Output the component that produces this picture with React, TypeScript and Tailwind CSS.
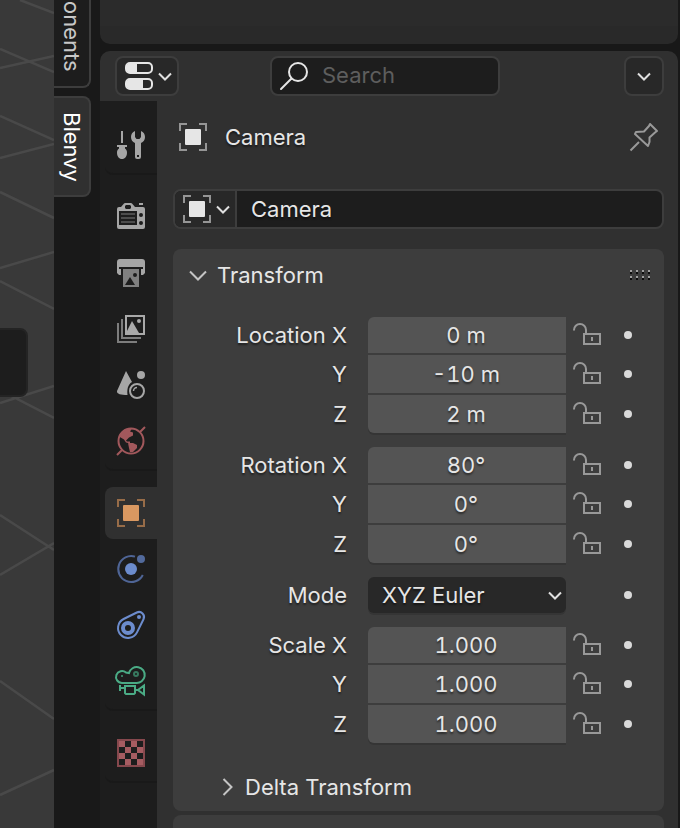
import type { ReactNode } from "react";

type Kids = { children: ReactNode };

function Icon({ children }: Kids) {
  return (
    <svg width="28" height="28" viewBox="0 0 28 28" fill="none" className="shrink-0 overflow-visible" aria-hidden="true">
      {children}
    </svg>
  );
}

function Chevron() {
  return (
    <svg width="14" height="9" viewBox="0 0 14 9" fill="none" className="shrink-0" aria-hidden="true">
      <path d="M1 1.500L7 7.500L13 1.500" stroke="#e0e0e0" strokeWidth="2" />
    </svg>
  );
}

function ObjectIcon({ frame, fill }: { frame: string; fill: string }) {
  return (
    <Icon>
      <path d="M1 8V1h7M20 1h7v7M27 20v7h-7M8 27H1v-7" stroke={frame} strokeWidth="2" />
      <rect x="6" y="6" width="16" height="16" rx="1" fill={fill} />
    </Icon>
  );
}

function ToolIcon() {
  return (
    <Icon>
      <g fill="#a6a6a6">
        <rect x="4" y="0" width="2" height="12" />
        <path d="M0 14h10v2H8v1.500c1.300 1 2 2.300 2 4C10 25.500 8 28 5 28s-5-2.500-5-6.500c0-1.700.7-3 2-4V16H0z" />
        <path fillRule="evenodd" d="M18 0c-2.500 1-4 3.300-4 6 0 2.700 1.500 5 4 6v14a2 2 0 0 0 2 2h2a2 2 0 0 0 2-2V12c2.500-1 4-3.300 4-6 0-2.700-1.500-5-4-6v6l-1.500 2h-3L18 6zM20 24h2v2h-2z" />
      </g>
    </Icon>
  );
}

function RenderIcon() {
  return (
    <Icon>
      <path
        fillRule="evenodd"
        fill="#a6a6a6"
        d="M22 0h4v2h-4zM2 4h2l3-3.500L8 0h6l1 .5L18 4h8a2 2 0 0 1 2 2v18a2 2 0 0 1-2 2H2a2 2 0 0 1-2-2V6a2 2 0 0 1 2-2zM9 2L8 3v2l1 1h4l1-1V3l-1-1zM2 8v14h18V8zM24 10a2 2 0 1 0 0 4 2 2 0 0 0 0-4zM24 18a2 2 0 1 0 0 4 2 2 0 0 0 0-4z"
      />
      <path d="M4 11h14M4 15h14M4 19h14" stroke="#4c4c4c" strokeWidth="2" />
    </Icon>
  );
}

function OutputIcon() {
  return (
    <Icon>
      <path fill="#a6a6a6" d="M3 0h22a3 3 0 0 1 3 3v11l-2 2h-2v-6h2V8H2v2h2v6H2l-2-2V3a3 3 0 0 1 3-3z" />
      <path fill="#808080" fillRule="evenodd" d="M6 10h16v18H6zM8 26h10l-5-8zM18 14a2 2 0 1 0 0 4 2 2 0 0 0 0-4z" />
    </Icon>
  );
}

function ViewLayerIcon() {
  return (
    <Icon>
      <path d="M1 8v19h19M5 4v19h19" stroke="#7d7d7d" strokeWidth="2" />
      <rect x="9" y="1" width="18" height="18" stroke="#a9a9a9" strokeWidth="2" />
      <path d="M10 18v-2l5-10 7 12z" fill="#a9a9a9" />
      <circle cx="22" cy="6" r="2" fill="#a9a9a9" />
    </Icon>
  );
}

function SceneIcon() {
  return (
    <Icon>
      <path d="M9 0L0 20c-.5 3 4 4 10.500 4C10 19 10.500 13.500 15 11z" fill="#a6a6a6" />
      <circle cx="24" cy="4" r="4" fill="#a6a6a6" />
      <circle cx="20" cy="20" r="9" fill="#1d1d1d" />
      <circle cx="20" cy="20" r="7" stroke="#a6a6a6" strokeWidth="2" />
      <path d="M16.500 20a3.500 3.500 0 0 1 3.500-3.500" stroke="#a6a6a6" strokeWidth="1.500" />
    </Icon>
  );
}

function WorldIcon() {
  return (
    <Icon>
      <circle cx="14" cy="14" r="12.500" stroke="#a2585c" strokeWidth="2" />
      <path d="M28 0l-5 5M0 28l5-5" stroke="#a2585c" strokeWidth="2" />
      <path d="M3 7l5-5 7-.5-2 3 3 1v3l-4 2-3 3 1 1h3v2l-4-1-2-3-5-3zM11 16h5l4 2v3l-4 4h-3l-1-4z" fill="#a2585c" />
    </Icon>
  );
}

function PhysicsIcon() {
  return (
    <Icon>
      <path d="M18 1.600A13 13 0 1 0 25.800 20" stroke="#4f6596" strokeWidth="2" />
      <circle cx="14" cy="14" r="6" fill="#6c8ccd" />
      <circle cx="24" cy="4" r="4" fill="#526a9c" />
    </Icon>
  );
}

function ConstraintIcon() {
  return (
    <Icon>
      <path d="M6.600 8L19.800 1.500A5 5 0 0 1 26.500 8.200L20 21.400A10 10 0 1 1 6.600 8z" stroke="#6c8ccd" strokeWidth="2" />
      <circle cx="11" cy="17" r="5" stroke="#6c8ccd" strokeWidth="4" />
      <circle cx="22" cy="6" r="2" fill="#6c8ccd" />
    </Icon>
  );
}

function CameraDataIcon() {
  return (
    <Icon>
      <path d="M5 16A6 6 0 1 1 9 5.500L12 6A8 8 0 1 1 19 16z" stroke="#4aab85" strokeWidth="2" />
      <circle cx="19" cy="7" r="2" stroke="#37795f" strokeWidth="2" />
      <rect x="4" y="8" width="2" height="2" fill="#37795f" />
      <path d="M8 19h10v7l-1 1H9l-1-1zM3 18v6M3 21h5M18 23h3M27 18.500v9L21 23z" stroke="#4aab85" strokeWidth="2" />
    </Icon>
  );
}

function TextureIcon() {
  return (
    <Icon>
      <rect x="1" y="1" width="26" height="26" stroke="#86484d" strokeWidth="2" />
      <path
        fill="#a65c61"
        d="M2 2h6v6H2zM14 2h6v6h-6zM8 8h6v6H8zM20 8h6v6h-6zM2 14h6v6H2zM14 14h6v6h-6zM8 20h6v6H8zM20 20h6v6h-6z"
      />
    </Icon>
  );
}

function NavGroup({ children }: Kids) {
  return (
    <div className="flex flex-col gap-1 rounded-bl-lg border-b-2 border-[#191919] pb-0.5">{children}</div>
  );
}

function NavTab({ label, active, children }: Kids & { label: string; active?: boolean }) {
  return (
    <button
      type="button"
      aria-label={label}
      aria-pressed={!!active}
      className={
        active
          ? "flex h-13 w-full items-center rounded-l-lg bg-[#303030] pl-3"
          : "flex h-13 w-full items-center rounded-l-lg pl-3"
      }
    >
      {children}
    </button>
  );
}

function KeyDot({ name }: { name: string }) {
  return (
    <button type="button" aria-label={"Animate " + name} className="flex size-6 items-center justify-center">
      <span className="size-2 rounded-full bg-[#dadada]" />
    </button>
  );
}

function Lock({ name }: { name: string }) {
  return (
    <label className="flex">
      <input type="checkbox" className="sr-only" aria-label={"Lock " + name} />
      <Icon>
        <path d="M1 9.500V9a6 6 0 0 1 12 0v3" stroke="#999999" strokeWidth="2" />
        <rect x="11" y="13" width="16" height="10" stroke="#999999" strokeWidth="2" />
        <path d="M19 16v4" stroke="#999999" strokeWidth="2" />
      </Icon>
    </label>
  );
}

const rowGrid = "grid grid-cols-[65fr_66fr_98px] items-center";
const axes = ["X", "Y", "Z"];

function Vector({ name, values }: { name: string; values: string[] }) {
  return (
    <div role="group" aria-label={name} className="flex flex-col gap-0.5">
      {values.map((value, i) => {
        const id = name + axes[i];
        const shape =
          i === 0
            ? "h-9 rounded-tl-md"
            : i === 1
              ? "h-[38px]"
              : "h-[38px] rounded-bl-md shadow-[0_2px_0_#353535]";
        return (
          <div key={id} className={rowGrid}>
            <label htmlFor={id} className="pr-[21px] text-right">
              {i === 0 ? name + " X" : axes[i]}
            </label>
            <input
              id={id}
              defaultValue={value}
              className={"w-full min-w-0 bg-[#545454] pr-0.5 text-center tabular-nums outline-none [text-shadow:inherit] " + shape}
            />
            <div className="flex items-center gap-[15px] pl-[7px]">
              <Lock name={id} />
              <KeyDot name={id} />
            </div>
          </div>
        );
      })}
    </div>
  );
}

function Viewport() {
  return (
    <div className="relative w-[54px] shrink-0 overflow-hidden bg-[#393939]">
      <svg width="54" height="828" viewBox="0 0 54 828" fill="none" className="block" aria-hidden="true">
        <path
          d="M20 0L54 13M0 49L54 72M0 68L54 56M0 116L54 140M0 158L54 144M0 192L54 218M0 268L54 252M0 281L54 309M0 403L54 386M0 390L54 418M0 515L54 550M0 575L54 543M0 681L54 719M0 795L54 770"
          stroke="#494949"
          strokeWidth="2.500"
        />
      </svg>
      <div className="absolute top-[328px] -left-3 h-[69px] w-10 rounded-lg border-2 border-[#242424] bg-[#1d1d1d]" />
    </div>
  );
}

export default function App() {
  return (
    <div className="flex h-screen overflow-hidden bg-[#181818] font-['Inter',sans-serif] text-[22px] leading-7 text-[#e6e6e6]">
      <Viewport />

      <div className="flex w-[46px] shrink-0 flex-col gap-2 bg-[#191919] pr-[9px]">
        <button
          type="button"
          className="flex h-22 w-full items-center justify-end overflow-hidden rounded-br-lg border-r-2 border-b-2 border-[#3d3d3d] bg-[#1d1d1d] pb-3.5 text-[#c8c8c8] [writing-mode:vertical-rl]"
        >
          Components
        </button>
        <button
          type="button"
          className="flex h-[101px] w-full items-center justify-center rounded-r-lg border-2 border-l-0 border-[#3d3d3d] bg-[#303030] text-white [writing-mode:vertical-rl]"
        >
          Blenvy
        </button>
      </div>

      <div className="mr-0.5 flex min-w-0 flex-1 flex-col">
        <div className="h-11 shrink-0 rounded-b-[10px] bg-[#292929]">
          <div className="h-[26px] bg-[#2b2b2b]" />
        </div>

        <main className="mt-[7px] flex min-h-0 flex-1 flex-col rounded-t-[10px] bg-[#303030]">
          <header className="flex h-[50px] shrink-0 items-center pr-3.5 pl-[15px]">
            <button
              type="button"
              aria-label="Editor type"
              className="flex h-10 w-16 shrink-0 items-center gap-[5px] rounded-lg border-2 border-[#3d3d3d] bg-[#282828] pl-2"
            >
              <Icon>
                <rect x="1" y="1" width="26" height="10" rx="4" stroke="#e6e6e6" strokeWidth="2" />
                <path d="M4 1h8v10H4L1 8V4z" fill="#e6e6e6" />
                <rect x="1" y="17" width="26" height="10" rx="4" stroke="#e6e6e6" strokeWidth="2" />
                <path d="M4 17h14v10H4l-3-3v-4z" fill="#e6e6e6" />
              </Icon>
              <Chevron />
            </button>
            <label className="ml-[91px] flex h-10 w-[230px] items-center gap-3.5 rounded-lg border-2 border-[#3d3d3d] bg-[#1d1d1d] pl-2">
              <Icon>
                <circle cx="18" cy="10" r="9" stroke="#e6e6e6" strokeWidth="2" />
                <path d="M11.500 16.500L1 27" stroke="#e6e6e6" strokeWidth="2" strokeLinecap="round" />
              </Icon>
              <input
                type="text"
                aria-label="Search"
                placeholder="Search"
                className="w-full min-w-0 bg-transparent pb-0.5 outline-none placeholder:text-[#5e5e5e]"
              />
            </label>
            <button
              type="button"
              aria-label="Options"
              className="ml-auto flex size-10 shrink-0 items-center justify-center rounded-lg border-2 border-[#3d3d3d] bg-[#282828]"
            >
              <Chevron />
            </button>
          </header>

          <div className="flex min-h-0 flex-1">
            <nav aria-label="Property tabs" className="flex w-[57px] shrink-0 flex-col gap-4 bg-[#1d1d1d] pt-[18px] pl-[5px]">
              <NavGroup>
                <NavTab label="Tool"><ToolIcon /></NavTab>
              </NavGroup>
              <NavGroup>
                <NavTab label="Render"><RenderIcon /></NavTab>
                <NavTab label="Output"><OutputIcon /></NavTab>
                <NavTab label="View layer"><ViewLayerIcon /></NavTab>
                <NavTab label="Scene"><SceneIcon /></NavTab>
                <NavTab label="World"><WorldIcon /></NavTab>
              </NavGroup>
              <NavGroup>
                <NavTab label="Object" active><ObjectIcon frame="#976c48" fill="#d99861" /></NavTab>
                <NavTab label="Physics"><PhysicsIcon /></NavTab>
                <NavTab label="Constraints"><ConstraintIcon /></NavTab>
                <NavTab label="Data"><CameraDataIcon /></NavTab>
              </NavGroup>
              <NavGroup>
                <NavTab label="Texture"><TextureIcon /></NavTab>
              </NavGroup>
            </nav>

            <div className="flex min-w-0 flex-1 flex-col pr-3.5 pl-4 [text-shadow:0_2px_2px_rgb(0_0_0/0.5)]">
              <div className="mt-4 flex h-10 shrink-0 items-center px-1.5">
                <ObjectIcon frame="#959595" fill="#e6e6e6" />
                <h1 className="ml-[18px]">Camera</h1>
                <button type="button" aria-label="Pin" className="ml-auto">
                  <Icon>
                    <path
                      d="M20 1l7 7-2 1.500-5.500 5V19L18 23 5 11l1-2 8-.5L19 3zM9 19l-8.500 8.500"
                      stroke="#999999"
                      strokeWidth="2"
                      strokeLinejoin="round"
                    />
                  </Icon>
                </button>
              </div>

              <div className="mt-8 flex h-10 shrink-0 overflow-hidden rounded-lg border-2 border-[#3d3d3d] bg-[#1d1d1d]">
                <button
                  type="button"
                  aria-label="Browse objects"
                  className="flex w-[62px] shrink-0 items-center gap-[5px] border-r-2 border-[#3d3d3d] bg-[#282828] pl-2"
                >
                  <ObjectIcon frame="#959595" fill="#e6e6e6" />
                  <Chevron />
                </button>
                <input
                  aria-label="Object name"
                  defaultValue="Camera"
                  className="min-w-0 flex-1 bg-transparent px-3.5 outline-none [text-shadow:inherit]"
                />
              </div>

              <section className="mt-5 flex shrink-0 flex-col rounded-lg bg-[#3d3d3d] pb-1">
                <div className="flex h-13 items-center pr-3.5 pl-4">
                  <button type="button" aria-expanded="true" className="flex items-center gap-2.5">
                    <svg width="18" height="11" viewBox="0 0 18 11" fill="none" aria-hidden="true">
                      <path d="M1 1.500L9 9.500L17 1.500" stroke="#c4c4c4" strokeWidth="2" />
                    </svg>
                    Transform
                  </button>
                  <svg width="20" height="10" viewBox="0 0 20 10" className="ml-auto" aria-hidden="true">
                    <path d="M0 1h2m4 0h2m4 0h2m4 0h2M0 7h2m4 0h2m4 0h2m4 0h2" stroke="#a0a0a0" strokeWidth="2" />
                    <path d="M0 3h2m4 0h2m4 0h2m4 0h2M0 9h2m4 0h2m4 0h2m4 0h2" stroke="#0c0c0c" strokeWidth="2" />
                  </svg>
                </div>

                <div className="mt-4 flex flex-col gap-3.5">
                  <Vector name="Location" values={["0 m", "-10 m", "2 m"]} />
                  <Vector name="Rotation" values={["80°", "0°", "0°"]} />
                  <div className={rowGrid}>
                    <label htmlFor="mode" className="pr-[21px] text-right">Mode</label>
                    <div className="relative">
                      <select
                        id="mode"
                        defaultValue="XYZ Euler"
                        className="block h-9 w-full appearance-none rounded-md bg-[#282828] pl-3.5 shadow-[0_2px_0_#353535] outline-none [text-shadow:inherit]"
                      >
                        <option>XYZ Euler</option>
                        <option>Quaternion</option>
                      </select>
                      <span className="pointer-events-none absolute inset-y-0 right-1 flex items-center">
                        <Chevron />
                      </span>
                    </div>
                    <div className="flex pl-[50px]">
                      <KeyDot name="Mode" />
                    </div>
                  </div>
                  <Vector name="Scale" values={["1.000", "1.000", "1.000"]} />
                </div>

                <button type="button" aria-expanded="false" className="mt-6 flex h-10 items-center gap-3 pl-[49px]">
                  <svg width="11" height="18" viewBox="0 0 11 18" fill="none" aria-hidden="true">
                    <path d="M1.500 1L9.500 9L1.500 17" stroke="#c4c4c4" strokeWidth="2" />
                  </svg>
                  Delta Transform
                </button>
              </section>

              <section aria-label="Relations" className="mt-1 h-13 shrink-0 rounded-t-lg bg-[#3d3d3d]" />
            </div>
          </div>
        </main>
      </div>
    </div>
  );
}
